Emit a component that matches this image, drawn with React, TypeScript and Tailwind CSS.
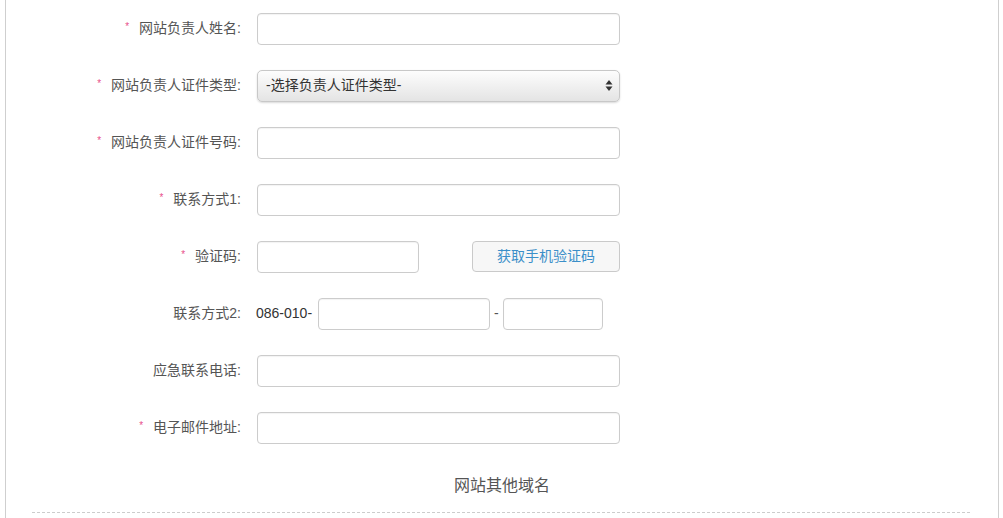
import React from "react";

const font = { fontFamily: '"Liberation Sans", Arial, "Noto Sans CJK SC", sans-serif' };

function Star() {
  return <span className="text-[#e8508a] text-[10px] mr-[10px] relative top-[-3px]">*</span>;
}

function Label({ text, req }: { text: string; req?: boolean }) {
  return (
    <div className="w-[235px] shrink-0 text-right text-[14px] text-[#555]">
      {req && <Star />}
      {text}
    </div>
  );
}

function Input({ w }: { w: string }) {
  return (
    <input
      className={`${w} h-[32px] border border-[#ccc] rounded-[4px] bg-white shadow-[inset_0_1px_1px_rgba(0,0,0,0.05)] outline-none`}
    />
  );
}

function Row({ children }: { children: React.ReactNode }) {
  return <div className="h-[57px] flex items-center">{children}</div>;
}

export default function App() {
  return (
    <div className="w-[1003px] h-[518px] overflow-hidden bg-white" style={font}>
      <div className="ml-[5px] w-[994px] h-[518px] border-l border-r border-[#cfcfcf]">
        <Row>
          <Label text="网站负责人姓名:" req />
          <div className="ml-[16px]"><Input w="w-[363px]" /></div>
        </Row>
        <Row>
          <Label text="网站负责人证件类型:" req />
          <div className="ml-[16px] w-[363px] h-[32px] rounded-[5px] border border-[#c8c8c8] bg-gradient-to-b from-[#fdfdfd] to-[#e4e4e4] shadow-[0_1px_2px_rgba(0,0,0,0.15)] flex items-center justify-between pl-[8px] pr-[6px]">
            <span className="text-[14px] text-[#333]">-选择负责人证件类型-</span>
            <svg width="8" height="13" viewBox="0 0 8 13">
              <path d="M4 1 L7.5 5.5 L0.5 5.5 Z" fill="#333" />
              <path d="M4 12 L7.5 7.5 L0.5 7.5 Z" fill="#333" />
            </svg>
          </div>
        </Row>
        <Row>
          <Label text="网站负责人证件号码:" req />
          <div className="ml-[16px]"><Input w="w-[363px]" /></div>
        </Row>
        <Row>
          <Label text="联系方式1:" req />
          <div className="ml-[16px]"><Input w="w-[363px]" /></div>
        </Row>
        <Row>
          <Label text="验证码:" req />
          <div className="ml-[16px]"><Input w="w-[162px]" /></div>
          <button className="ml-[53px] w-[148px] h-[31px] border border-[#cacaca] rounded-[4px] bg-[#f7f7f7] text-[14px] text-[#3b8fc9]">
            获取手机验证码
          </button>
        </Row>
        <Row>
          <Label text="联系方式2:" />
          <span className="ml-[15px] text-[14px] text-[#333]">086-010-</span>
          <div className="ml-[6px]"><Input w="w-[172px]" /></div>
          <span className="ml-[4px] mr-[4px] text-[14px] text-[#555]">-</span>
          <Input w="w-[100px]" />
        </Row>
        <Row>
          <Label text="应急联系电话:" />
          <div className="ml-[16px]"><Input w="w-[363px]" /></div>
        </Row>
        <Row>
          <Label text="电子邮件地址:" req />
          <div className="ml-[16px]"><Input w="w-[363px]" /></div>
        </Row>
        <div className="h-[56px] pt-[4px] flex items-center justify-center text-[16px] text-[#555]">网站其他域名</div>
        <div className="ml-[26px] mr-[28px] border-t border-dashed border-[#cccccc]" />
      </div>
    </div>
  );
}
